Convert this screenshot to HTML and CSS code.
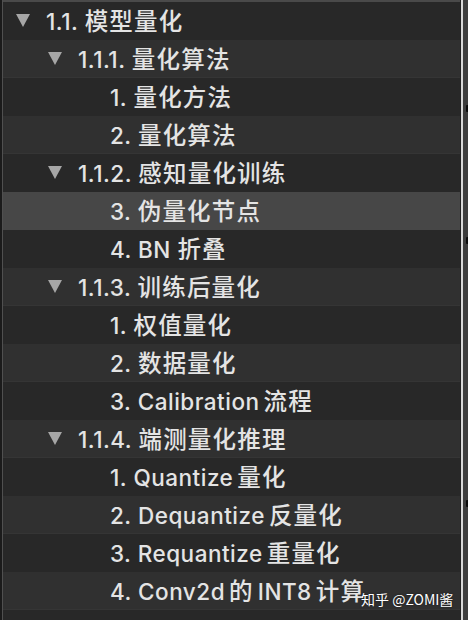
FILE: index.html
```html
<!DOCTYPE html>
<html lang="zh">
<head>
<meta charset="utf-8">
<link rel="stylesheet" href="styles.css">
</head>
<body>
<div class="frame">
  <div class="edge-left"></div>
  <div class="tree">
    <div class="row lv0"><span class="tog"></span><span class="label">1.1. <span class="zh">模型量化</span></span></div>
    <div class="row lv1"><span class="tog"></span><span class="label">1.1.1. <span class="zh">量化算法</span></span></div>
    <div class="row lv2"><span class="sp"></span><span class="label">1. <span class="zh">量化方法</span></span></div>
    <div class="row lv2"><span class="sp"></span><span class="label">2. <span class="zh">量化算法</span></span></div>
    <div class="row lv1"><span class="tog"></span><span class="label">1.1.2. <span class="zh">感知量化训练</span></span></div>
    <div class="row lv2 sel"><span class="sp"></span><span class="label">3. <span class="zh">伪量化节点</span></span></div>
    <div class="row lv2"><span class="sp"></span><span class="label">4. BN <span class="zh">折叠</span></span></div>
    <div class="row lv1"><span class="tog"></span><span class="label">1.1.3. <span class="zh">训练后量化</span></span></div>
    <div class="row lv2"><span class="sp"></span><span class="label">1. <span class="zh">权值量化</span></span></div>
    <div class="row lv2"><span class="sp"></span><span class="label">2. <span class="zh">数据量化</span></span></div>
    <div class="row lv2"><span class="sp"></span><span class="label">3. Calibration<span class="zh g">流程</span></span></div>
    <div class="row lv1"><span class="tog"></span><span class="label">1.1.4. <span class="zh">端测量化推理</span></span></div>
    <div class="row lv2"><span class="sp"></span><span class="label">1. Quantize<span class="zh g">量化</span></span></div>
    <div class="row lv2"><span class="sp"></span><span class="label">2. Dequantize<span class="zh g">反量化</span></span></div>
    <div class="row lv2"><span class="sp"></span><span class="label">3. Requantize<span class="zh g">重量化</span></span></div>
    <div class="row lv2"><span class="sp"></span><span class="label">4. Conv2d<span class="zh g">的</span><span class="g">INT8</span><span class="zh g">计算</span></span></div>
    <div class="row lv2"></div>
  </div>
  <div class="edge-right">
    <span class="mark m1"></span>
    <span class="mark m2"></span>
    <span class="mark m3"></span>
  </div>
  <div class="watermark">知乎 @ZOMI酱</div>
</div>
</body>
</html>
```
FILE: styles.css
```css
html, body {
  margin: 0;
  padding: 0;
  background: #262626;
}
body {
  width: 468px;
  height: 620px;
  overflow: hidden;
  font-family: "Inter", "Noto Sans CJK SC", sans-serif;
}
.frame {
  position: relative;
  display: flex;
  width: 468px;
  height: 620px;
  overflow: hidden;
}
.edge-left {
  width: 2px;
  background: #1b1b1b;
  border-right: 1px solid #505050;
  flex: none;
}
.tree {
  flex: 1;
  border-top: 2px solid #4a4a4a;
  display: flex;
  flex-direction: column;
  overflow: hidden;
}
.row {
  height: 38px;
  flex: none;
  display: flex;
  align-items: center;
  padding-left: 13px;
  color: #e4e4e4;
  font-size: 22.5px;
  font-weight: 500;
  letter-spacing: 0.5px;
  white-space: nowrap;
  background: #282828;
}
.row:nth-child(even) {
  background: #303030;
  box-shadow: inset 0 -1px 0 #353535;
}
.row.sel {
  background: #474747;
  box-shadow: none;
}
.lv1 { padding-left: 45px; }
.lv2 { padding-left: 77px; }
.tog, .sp {
  width: 30px;
  flex: none;
  display: flex;
  align-items: center;
}
.tog::before {
  content: "";
  width: 0;
  height: 0;
  border-left: 7px solid transparent;
  border-right: 7px solid transparent;
  border-top: 13px solid #a6a6a6;
  margin-top: -1px;
}
.label {
  line-height: 38px;
}
.zh {
  font-family: "Noto Sans CJK SC", sans-serif;
  font-size: 23.5px;
  font-weight: 500;
  letter-spacing: 1.2px;
}
.g {
  margin-left: 4px;
}
.edge-right {
  position: relative;
  width: 7px;
  flex: none;
  background: #3c3c3c;
  border-left: 1px solid #1f1f1f;
  box-shadow: inset 2px 0 0 #d6d6d6;
}
.mark {
  position: absolute;
  right: 0;
  width: 2px;
  height: 7px;
  background: #0a0a0a;
  border-radius: 1px 0 0 1px;
}
.m1 { top: 105px; }
.m2 { top: 237px; }
.m3 { top: 500px; }
.watermark {
  position: absolute;
  left: 361px;
  top: 589px;
  color: #ffffff;
  font-family: "Noto Sans CJK SC", sans-serif;
  font-size: 14px;
  line-height: 20px;
  text-shadow: 0 0 2px rgba(0,0,0,0.6);
  white-space: nowrap;
}
```
